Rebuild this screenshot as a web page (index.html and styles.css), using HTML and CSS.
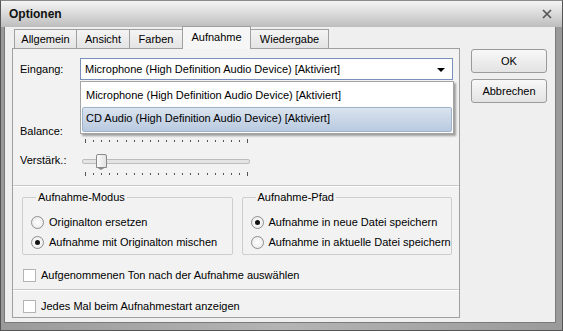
FILE: index.html
```html
<!DOCTYPE html>
<html lang="de">
<head>
    <meta charset="UTF-8">
    <title>Optionen</title>
    <link rel="stylesheet" href="styles.css">
</head>
<body>

<div class="window">
    <div class="titlebar">
        <span class="title">Optionen</span>
        <svg class="close" width="10" height="10" viewBox="0 0 10 10">
            <path d="M1 1 L9 9 M9 1 L1 9" stroke="#555" stroke-width="1.7"/>
        </svg>
    </div>

    <div class="client">
        <div class="tabs-area">
            <div class="tabs">
                <div class="tab t-general">Allgemein</div>
                <div class="tab t-view">Ansicht</div>
                <div class="tab t-colors">Farben</div>
                <div class="tab t-record active">Aufnahme</div>
                <div class="tab t-play">Wiedergabe</div>
            </div>

            <div class="panel">
                <div class="row input-row">
                    <span class="label">Eingang:</span>
                    <div class="combo">
                        <span>Microphone (High Definition Audio Device) [Aktiviert]</span>
                        <span class="arrow"></span>
                    </div>
                    <div class="dropdown">
                        <div class="item">Microphone (High Definition Audio Device) [Aktiviert]</div>
                        <div class="item selected">CD Audio (High Definition Audio Device) [Aktiviert]</div>
                    </div>
                </div>

                <div class="row slider-row balance">
                    <span class="label">Balance:</span>
                    <div class="slider">
                        <div class="ticks"></div>
                    </div>
                </div>

                <div class="row slider-row gain">
                    <span class="label">Verstärk.:</span>
                    <div class="slider">
                        <div class="track"></div>
                        <div class="thumb"></div>
                        <div class="ticks"></div>
                    </div>
                </div>

                <div class="sep"></div>

                <div class="groups">
                    <fieldset class="group">
                        <legend>Aufnahme-Modus</legend>
                        <label class="opt"><span class="radio"></span>Originalton ersetzen</label>
                        <label class="opt"><span class="radio on"></span>Aufnahme mit Originalton mischen</label>
                    </fieldset>
                    <fieldset class="group">
                        <legend>Aufnahme-Pfad</legend>
                        <label class="opt"><span class="radio on"></span>Aufnahme in neue Datei speichern</label>
                        <label class="opt"><span class="radio"></span>Aufnahme in aktuelle Datei speichern</label>
                    </fieldset>
                </div>

                <label class="opt check-row first"><span class="check"></span>Aufgenommenen Ton nach der Aufnahme auswählen</label>
                <div class="sep"></div>
                <label class="opt check-row last"><span class="check"></span>Jedes Mal beim Aufnahmestart anzeigen</label>
            </div>
        </div>

        <div class="buttons">
            <div class="btn">OK</div>
            <div class="btn">Abbrechen</div>
        </div>
    </div>
</div>

</body>
</html>
```

FILE: styles.css
```css
body {
    margin: 0;
    padding: 0;
    font-family: "Liberation Sans", Arial, sans-serif;
    font-size: 11px;
    color: #000;
    background: #fff;
}
.window {
    width: 563px;
    height: 331px;
    box-sizing: border-box;
    border: 1px solid #555;
    border-top-color: #8a8a8a;
    background: linear-gradient(90deg, #9a9a9a, #b4b4b4 50%, #9a9a9a);
    padding: 0 6px 7px 3px;
    display: flex;
    flex-direction: column;
}
.titlebar {
    height: 26px;
    flex: none;
    margin: 0 -6px 0 -3px;
    padding: 0 10px 0 8px;
    background: linear-gradient(#f4f4f4, #dcdcdc 45%, #bdbdbd);
    display: flex;
    align-items: center;
    justify-content: space-between;
}
.title {
    font-weight: bold;
    font-size: 12px;
    color: #111;
}
.close {
    margin-top: -1px;
}
.client {
    height: 296px;
    flex: none;
    box-sizing: border-box;
    background: #efefef;
    border: 1px solid #7a7a7a;
    border-top: none;
    display: flex;
    padding: 0 7px 0 7px;
    gap: 11px;
}
.tabs-area {
    width: 448px;
    display: flex;
    flex-direction: column;
}
.tabs {
    display: flex;
    align-items: flex-end;
    height: 22px;
    flex: none;
    padding-left: 2px;
}
.tab {
    height: 20px;
    line-height: 19px;
    text-align: center;
    border: 1px solid #a0a0a0;
    border-bottom: none;
    margin-right: -1px;
    background: linear-gradient(#f4f4f4, #e3e3e3);
    box-sizing: border-box;
}
.t-general { width: 63px; }
.t-view { width: 54px; }
.t-colors { width: 54px; }
.t-record { width: 69px; }
.t-play { width: 79px; }
.tab.active {
    height: 23px;
    line-height: 21px;
    background: #f6f6f6;
    position: relative;
    z-index: 2;
}
.panel {
    height: 270px;
    flex: none;
    box-sizing: border-box;
    border: 1px solid #a0a0a0;
    background: #f2f2f2;
    margin-top: -1px;
    padding: 9px 0 0 0;
    display: flex;
    flex-direction: column;
}
.row {
    display: flex;
    align-items: center;
    padding-left: 7px;
}
.label {
    width: 60px;
}
.input-row {
    position: relative;
    height: 22px;
    flex: none;
}
.combo {
    width: 373px;
    height: 22px;
    box-sizing: border-box;
    border: 1px solid #7b8fbd;
    background: #fff;
    display: flex;
    align-items: center;
    justify-content: space-between;
    padding: 0 7px 0 4px;
}
.arrow {
    width: 0;
    height: 0;
    margin-top: 1px;
    border-left: 4px solid transparent;
    border-right: 4px solid transparent;
    border-top: 4px solid #000;
}
.dropdown {
    position: absolute;
    left: 67px;
    top: 23px;
    width: 374px;
    box-sizing: border-box;
    background: #fff;
    border: 1px solid #a4a4a4;
    padding: 2px 1px 1px;
    box-shadow: 2px 2px 2px rgba(0, 0, 0, 0.35);
    z-index: 5;
}
.item {
    height: 23px;
    line-height: 23px;
    padding-left: 4px;
}
.item.selected {
    background: linear-gradient(#dae3ee, #c9d6e7 50%, #b9cadf);
    border: 1px solid #9fb2cc;
    border-radius: 2px;
    line-height: 21px;
    padding-left: 3px;
}
.slider-row {
    align-items: flex-start;
    flex: none;
}
.slider-row .label {
    line-height: 13px;
}
.balance {
    height: 18px;
    margin-top: 45px;
}
.gain {
    height: 22px;
    margin-top: 11px;
}
.slider {
    position: relative;
    width: 168px;
    height: 100%;
    margin-left: 2px;
}
.track {
    position: absolute;
    left: 0;
    top: 5px;
    width: 166px;
    height: 3px;
    border: 1px solid #bdbdbd;
    border-radius: 2px;
    background: #e4e4e4;
}
.thumb {
    position: absolute;
    left: 14px;
    top: 0;
    width: 9px;
    height: 12px;
    border: 1px solid #8a8a8a;
    border-radius: 2px 2px 0 0;
    background: linear-gradient(90deg, #fafafa, #e2e2e2);
}
.thumb::after {
    content: "";
    position: absolute;
    left: -1px;
    top: 12px;
    border-left: 5.5px solid transparent;
    border-right: 5.5px solid transparent;
    border-top: 3px solid #8a8a8a;
}
.ticks {
    position: absolute;
    left: 3px;
    top: 14px;
    width: 163px;
    height: 4px;
    background:
        linear-gradient(90deg, #555 0 1px, transparent 1px calc(100% - 1px), #555 calc(100% - 1px)),
        repeating-linear-gradient(90deg, #555 0 1px, transparent 1px 8.1px) 0 1px / 100% 2px no-repeat;
}
.gain .ticks {
    top: 18px;
}
.sep {
    flex: none;
    border-top: 1px solid #c9c9c9;
    border-bottom: 1px solid #fff;
}
.gain + .sep {
    margin-top: 9px;
}
.groups {
    display: flex;
    flex: none;
    gap: 9px;
    padding: 4px 7px 0 9px;
}
.group {
    flex: 1;
    margin: 0;
    border: 1px solid #cdcdcd;
    border-radius: 2px;
    padding: 8px 0 2px 8px;
    display: flex;
    flex-direction: column;
}
.group legend {
    padding: 0 2px;
    margin-left: 5px;
    line-height: 13px;
}
.opt {
    display: flex;
    align-items: center;
    height: 20px;
    flex: none;
    white-space: nowrap;
}
.radio {
    width: 11px;
    height: 11px;
    border: 1px solid #8e8f8f;
    border-radius: 50%;
    background: radial-gradient(#fff, #e6e6e6);
    margin-right: 5px;
    position: relative;
}
.radio.on::after {
    content: "";
    position: absolute;
    left: 3px;
    top: 3px;
    width: 5px;
    height: 5px;
    border-radius: 50%;
    background: #111;
}
.check-row {
    padding-left: 10px;
    height: 16px;
}
.check-row.first {
    margin-top: 12px;
    margin-bottom: 6px;
}
.check-row.last {
    margin-top: 7px;
}
.check {
    width: 11px;
    height: 11px;
    border: 1px solid #b4b4b4;
    background: #fff;
    margin-right: 5px;
}
.buttons {
    display: flex;
    flex-direction: column;
    gap: 6px;
    padding-top: 22px;
}
.btn {
    width: 76px;
    height: 24px;
    box-sizing: border-box;
    border: 1px solid #9a9a9a;
    border-radius: 3px;
    background: linear-gradient(#f8f8f8, #e3e3e3);
    text-align: center;
    line-height: 22px;
}
```
